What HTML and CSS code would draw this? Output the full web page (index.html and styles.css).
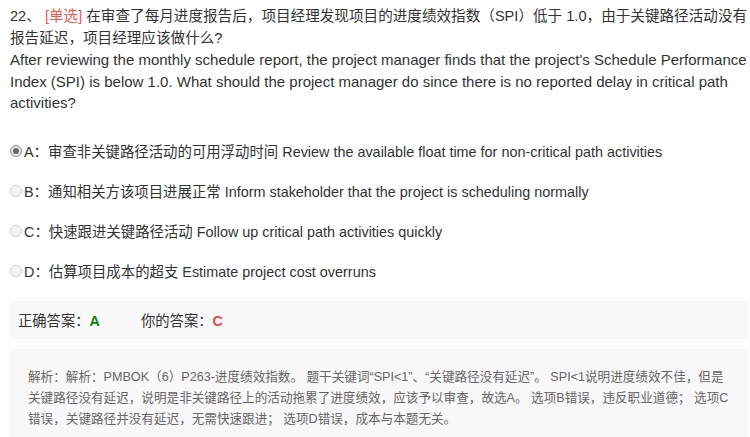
FILE: index.html
```html
<!DOCTYPE html>
<html lang="zh">
<head>
<meta charset="utf-8">
<link rel="stylesheet" href="styles.css">
</head>
<body>
<div class="page">
  <div class="question">
    <p class="q-cn">22、 <span class="q-type">[单选]</span> 在审查了每月进度报告后，项目经理发现项目的进度绩效指数（SPI）低于 1.0，由于关键路径活动没有报告延迟，项目经理应该做什么?</p>
    <p class="q-en">After reviewing the monthly schedule report, the project manager finds that the project's Schedule Performance Index (SPI) is below 1.0. What should the project manager do since there is no reported delay in critical path activities?</p>
  </div>
  <ul class="options">
    <li class="option"><span class="radio checked"></span><span class="opt-text">A：审查非关键路径活动的可用浮动时间 Review the available float time for non-critical path activities</span></li>
    <li class="option"><span class="radio"></span><span class="opt-text">B：通知相关方该项目进展正常 Inform stakeholder that the project is scheduling normally</span></li>
    <li class="option"><span class="radio"></span><span class="opt-text">C：快速跟进关键路径活动 Follow up critical path activities quickly</span></li>
    <li class="option"><span class="radio"></span><span class="opt-text">D：估算项目成本的超支 Estimate project cost overruns</span></li>
  </ul>
  <div class="answer-box">
    <span class="ans-item">正确答案：<b class="ans-right">A</b></span>
    <span class="ans-item">你的答案：<b class="ans-wrong">C</b></span>
  </div>
  <div class="analysis">
    <p>解析：解析：PMBOK（6）P263-进度绩效指数。 题干关键词“SPI&lt;1”、“关键路径没有延迟”。 SPI&lt;1说明进度绩效不佳，但是关键路径没有延迟，说明是非关键路径上的活动拖累了进度绩效，应该予以审查，故选A。 选项B错误，违反职业道德； 选项C错误，关键路径并没有延迟，无需快速跟进； 选项D错误，成本与本题无关。</p>
  </div>
</div>
</body>
</html>
```

FILE: styles.css
```css
* { box-sizing: border-box; }
html, body { margin: 0; padding: 0; background: #fff; }
body {
  font-family: "Liberation Sans", "Noto Sans CJK SC", sans-serif;
  color: #333;
  font-size: 14px;
}
.page {
  padding: 6px 2px 0 10px;
}
.question p {
  margin: 0;
  font-size: 15px;
  line-height: 21.5px;
}
.question .q-cn { font-size: 14.6px; }
.q-type { color: #ee5a4f; }
.options {
  list-style: none;
  margin: 18px 0 0 0;
  padding: 0;
}
.option {
  display: flex;
  align-items: center;
  height: 40px;
  line-height: 20px;
  font-size: 14.4px;
}
.radio {
  width: 12px;
  height: 12px;
  border-radius: 50%;
  border: 1px solid #d0d0d0;
  background: #f4f4f4;
  margin-right: 2px;
  flex: none;
  position: relative;
  top: -1px;
}
.radio.checked {
  border-color: #8a8a8a;
  background: #e8e8e8;
  display: flex;
  align-items: center;
  justify-content: center;
}
.radio.checked::after {
  content: "";
  width: 6px;
  height: 6px;
  border-radius: 50%;
  background: #666;
}
.answer-box {
  margin-top: 9px;
  height: 38px;
  background: #f8f8f8;
  display: flex;
  align-items: center;
  padding-left: 8px;
  font-size: 14.3px;
}
.ans-item { width: 123px; }
.ans-right { color: #0d8a0d; font-weight: bold; }
.ans-wrong { color: #f04646; font-weight: bold; }
.analysis {
  margin-top: 10px;
  background: #f8f8f8;
  padding: 18px 16px 20px 18px;
  min-height: 100px;
}
.analysis p {
  margin: 0;
  font-size: 12.6px;
  line-height: 21px;
  color: #666;
}
```
